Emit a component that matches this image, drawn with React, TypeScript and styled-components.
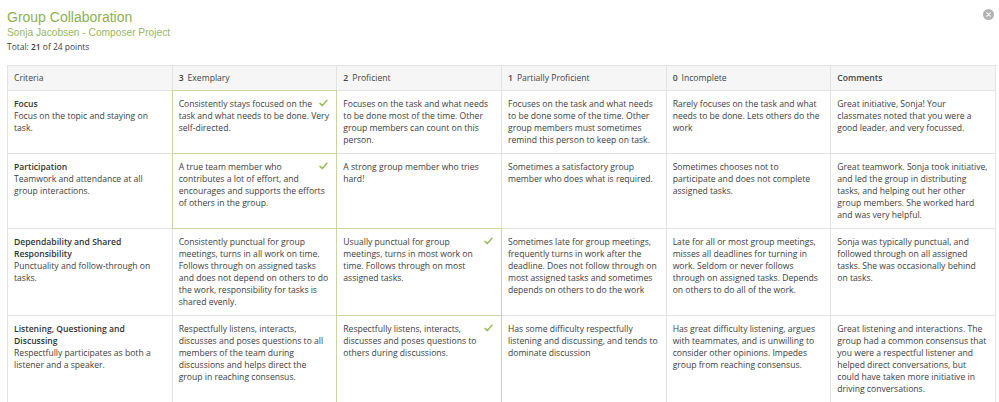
import React from "react";
import styled, { createGlobalStyle } from "styled-components";

const Global = createGlobalStyle`
  html, body { margin: 0; padding: 0; background: #ffffff; }
  body { font-family: "Open Sans", "Liberation Sans", sans-serif; color: #3d3d3d; }
`;

const Page = styled.div`
  position: relative;
  padding: 8px 3px 0 7px;
`;

const Title = styled.h1`
  margin: 0;
  font-family: "Liberation Sans", Arial, sans-serif;
  font-weight: normal;
  font-size: 14px;
  line-height: 18px;
  color: #8fae52;
`;

const Subtitle = styled.h2`
  margin: 0;
  font-family: "Liberation Sans", Arial, sans-serif;
  font-weight: normal;
  font-size: 10.2px;
  line-height: 14px;
  color: #98b55f;
`;

const Total = styled.div`
  font-size: 8.45px;
  line-height: 14px;
  color: #3d3d3d;
  b { font-weight: 600; }
`;

const Close = styled.button`
  position: absolute;
  top: 9px;
  right: 5px;
  width: 11px;
  height: 11px;
  padding: 0;
  border: none;
  border-radius: 50%;
  background: #b3b3b3;
  display: flex;
  align-items: center;
  justify-content: center;
  cursor: pointer;
`;

const Table = styled.table`
  margin-top: 11px;
  width: 989px;
  border-collapse: collapse;
  table-layout: fixed;
  font-size: 8.6px;
  line-height: 12px;
`;

const Th = styled.th`
  background: #f6f6f6;
  border: 1px solid #e3e3e3;
  padding: 6px 6px 6px;
  text-align: left;
  font-weight: normal;
  color: #444;
  height: 12px;
  b { font-weight: 600; margin-right: 4px; }
`;

const HeadStrong = styled.span`
  font-weight: 600;
`;

const Td = styled.td<{ $selected?: boolean }>`
  border: ${(p) => (p.$selected ? "1px double #cad69f" : "1px solid #e3e3e3")};
  padding: 7px 7px 7px 6px;
  vertical-align: top;
  color: #3d3d3d;
`;

const CriterionName = styled.div`
  font-weight: 600;
  color: #333;
`;

const Check = styled.svg`
  float: right;
  margin: 1px 1px 0 4px;
`;

type Level = { text: string; selected?: boolean };
type Row = { name: string; desc: string; levels: Level[]; comment: string };

const rows: Row[] = [
  {
    name: "Focus",
    desc: "Focus on the topic and staying on task.",
    levels: [
      { text: "Consistently stays focused on the task and what needs to be done. Very self-directed.", selected: true },
      { text: "Focuses on the task and what needs to be done most of the time. Other group members can count on this person." },
      { text: "Focuses on the task and what needs to be done some of the time. Other group members must sometimes remind this person to keep on task." },
      { text: "Rarely focuses on the task and what needs to be done. Lets others do the work" },
    ],
    comment: "Great initiative, Sonja! Your classmates noted that you were a good leader, and very focussed.",
  },
  {
    name: "Participation",
    desc: "Teamwork and attendance at all group interactions.",
    levels: [
      { text: "A true team member who contributes a lot of effort, and encourages and supports the efforts of others in the group.", selected: true },
      { text: "A strong group member who tries hard!" },
      { text: "Sometimes a satisfactory group member who does what is required." },
      { text: "Sometimes chooses not to participate and does not complete assigned tasks." },
    ],
    comment: "Great teamwork. Sonja took initiative, and led the group in distributing tasks, and helping out her other group members. She worked hard and was very helpful.",
  },
  {
    name: "Dependability and Shared Responsibility",
    desc: "Punctuality and follow-through on tasks.",
    levels: [
      { text: "Consistently punctual for group meetings, turns in all work on time. Follows through on assigned tasks and does not depend on others to do the work, responsibility for tasks is shared evenly." },
      { text: "Usually punctual for group meetings, turns in most work on time. Follows through on most assigned tasks.", selected: true },
      { text: "Sometimes late for group meetings, frequently turns in work after the deadline. Does not follow through on most assigned tasks and sometimes depends on others to do the work" },
      { text: "Late for all or most group meetings, misses all deadlines for turning in work. Seldom or never follows through on assigned tasks. Depends on others to do all of the work." },
    ],
    comment: "Sonja was typically punctual, and followed through on all assigned tasks. She was occasionally behind on tasks.",
  },
  {
    name: "Listening, Questioning and Discussing",
    desc: "Respectfully participates as both a listener and a speaker.",
    levels: [
      { text: "Respectfully listens, interacts, discusses and poses questions to all members of the team during discussions and helps direct the group in reaching consensus." },
      { text: "Respectfully listens, interacts, discusses and poses questions to others during discussions.", selected: true },
      { text: "Has some difficulty respectfully listening and discussing, and tends to dominate discussion" },
      { text: "Has great difficulty listening, argues with teammates, and is unwilling to consider other opinions. Impedes group from reaching consensus." },
    ],
    comment: "Great listening and interactions. The group had a common consensus that you were a respectful listener and helped direct conversations, but could have taken more initiative in driving conversations.",
  },
];

const headers = [
  { n: "3", label: "Exemplary" },
  { n: "2", label: "Proficient" },
  { n: "1", label: "Partially Proficient" },
  { n: "0", label: "Incomplete" },
];

const CheckMark = () => (
  <Check width="9" height="8" viewBox="0 0 9 8" aria-hidden>
    <polyline points="1,4.4 3.4,6.6 8,1.2" fill="none" stroke="#9fbc5b" strokeWidth="1.5" strokeLinecap="round" strokeLinejoin="round" />
  </Check>
);

export default function App() {
  return (
    <>
      <Global />
      <Page>
        <Title>Group Collaboration</Title>
        <Subtitle>Sonja Jacobsen - Composer Project</Subtitle>
        <Total>
          Total: <b>21</b> of 24 points
        </Total>
        <Close aria-label="Close">
          <svg width="5" height="5" viewBox="0 0 5 5">
            <path d="M0.8 0.8 L4.2 4.2 M4.2 0.8 L0.8 4.2" stroke="#fff" strokeWidth="1.2" strokeLinecap="round" />
          </svg>
        </Close>
        <Table>
          <thead>
            <tr>
              <Th>Criteria</Th>
              {headers.map((h) => (
                <Th key={h.n}>
                  <b>{h.n}</b>
                  {h.label}
                </Th>
              ))}
              <Th>
                <HeadStrong>Comments</HeadStrong>
              </Th>
            </tr>
          </thead>
          <tbody>
            {rows.map((r) => (
              <tr key={r.name}>
                <Td>
                  <CriterionName>{r.name}</CriterionName>
                  {r.desc}
                </Td>
                {r.levels.map((l, i) => (
                  <Td key={i} $selected={l.selected}>
                    {l.selected && <CheckMark />}
                    {l.text}
                  </Td>
                ))}
                <Td>{r.comment}</Td>
              </tr>
            ))}
          </tbody>
        </Table>
      </Page>
    </>
  );
}
